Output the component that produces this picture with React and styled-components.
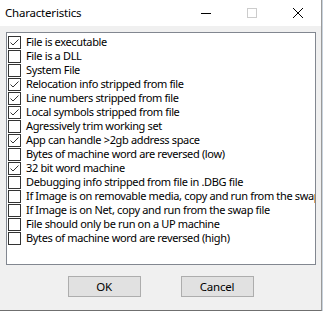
import React from 'react';
import styled, { createGlobalStyle } from 'styled-components';

const GlobalStyle = createGlobalStyle`
  html, body {
    margin: 0;
    padding: 0;
    background: #c9d3dd;
  }
  body {
    font-family: "Noto Sans", "Open Sans", sans-serif;
  }
`;

const Window = styled.div`
  width: 321px;
  height: 310px;
  background: #f0f0f0;
  border-right: 1px solid #9a9a9a;
  border-bottom: 1px solid #6f6f6f;
  display: flex;
  flex-direction: column;
  font-size: 11px;
  letter-spacing: -0.35px;
  color: #000;
`;

const TitleBar = styled.div`
  height: 26px;
  background: #fff;
  display: flex;
  align-items: center;
  padding-left: 5px;
`;

const Title = styled.div`
  flex: 1;
  font-size: 11.5px;
  letter-spacing: -0.2px;
  margin-top: -1px;
`;

const Caption = styled.div`
  width: 46px;
  height: 26px;
  display: flex;
  align-items: center;
  justify-content: center;
`;

const Body = styled.div`
  flex: 1;
  padding: 6px 5px 0 6px;
  display: flex;
  flex-direction: column;
`;

const ListBox = styled.div`
  background: #fff;
  border: 1px solid #828790;
  padding-top: 2px;
  overflow: hidden;
  height: 229px;
`;

const Row = styled.label`
  height: 14px;
  display: flex;
  align-items: center;
  padding-left: 1px;
  white-space: nowrap;
  line-height: 14px;
`;

const Box = styled.span`
  flex: none;
  width: 11px;
  height: 11px;
  border: 1px solid #333;
  background: #fff;
  margin-right: 5px;
  margin-top: 1px;
  display: flex;
  align-items: center;
  justify-content: center;
`;

const ButtonRow = styled.div`
  display: flex;
  justify-content: center;
  gap: 40px;
  margin-top: 11px;
  margin-left: -1px;
`;

const Button = styled.button`
  width: 73px;
  height: 21px;
  background: #e1e1e1;
  border: 1px solid #adadad;
  font-family: "Noto Sans", "Open Sans", sans-serif;
  font-size: 11.5px;
  letter-spacing: -0.2px;
  color: #000;
  padding: 0;
  border-radius: 0;
`;

const items = [
  ['File is executable', true],
  ['File is a DLL', false],
  ['System File', false],
  ['Relocation info stripped from file', true],
  ['Line numbers stripped from file', true],
  ['Local symbols stripped from file', true],
  ['Agressively trim working set', false],
  ['App can handle >2gb address space', true],
  ['Bytes of machine word are reversed (low)', false],
  ['32 bit word machine', true],
  ['Debugging info stripped from file in .DBG file', false],
  ['If Image is on removable media, copy and run from the swap file', false],
  ['If Image is on Net, copy and run from the swap file', false],
  ['File should only be run on a UP machine', false],
  ['Bytes of machine word are reversed (high)', false],
];

const Check = () => (
  <svg width="11" height="11" viewBox="0 0 11 11">
    <polyline points="1.5,5.5 4,8 9.5,2.5" fill="none" stroke="#333" strokeWidth="1" />
  </svg>
);

export default function App() {
  return (
    <Window>
      <GlobalStyle />
      <TitleBar>
        <Title>Characteristics</Title>
        <Caption>
          <svg width="10" height="10" viewBox="0 0 10 10">
            <line x1="0" y1="5.5" x2="10" y2="5.5" stroke="#000" strokeWidth="1" />
          </svg>
        </Caption>
        <Caption>
          <svg width="10" height="10" viewBox="0 0 10 10">
            <rect x="0.5" y="0.5" width="9" height="9" fill="none" stroke="#ccc" strokeWidth="1" />
          </svg>
        </Caption>
        <Caption>
          <svg width="10" height="10" viewBox="0 0 10 10">
            <path d="M0 0 L10 10 M10 0 L0 10" stroke="#000" strokeWidth="1" />
          </svg>
        </Caption>
      </TitleBar>
      <Body>
        <ListBox>
          {items.map(([text, on]) => (
            <Row key={text}>
              <Box>{on && <Check />}</Box>
              {text}
            </Row>
          ))}
        </ListBox>
        <ButtonRow>
          <Button>OK</Button>
          <Button>Cancel</Button>
        </ButtonRow>
      </Body>
    </Window>
  );
}
